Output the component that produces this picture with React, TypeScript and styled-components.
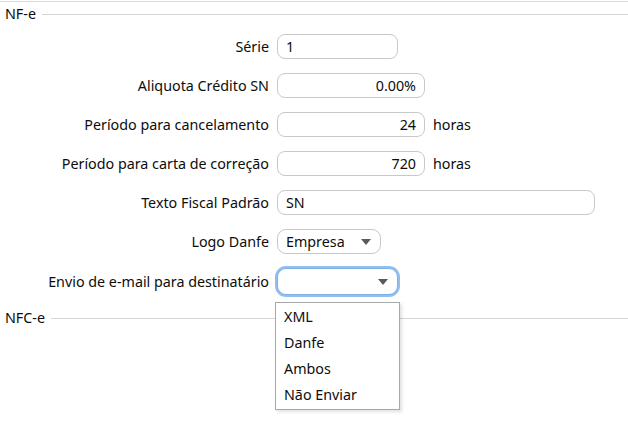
import React from "react";
import styled, { createGlobalStyle } from "styled-components";

const Global = createGlobalStyle`
  html, body { margin: 0; padding: 0; background: #fff; }
  body { font-family: "Noto Sans", "Open Sans", sans-serif; font-size: 14.3px; color: #0d0d0d; }
`;

const Page = styled.div`
  position: relative;
  width: 628px;
  height: 428px;
  overflow: hidden;
  border-top: 1px solid #dcdcdc;
  margin-top: 1px;
  box-sizing: border-box;
`;

const SectionHeader = styled.div<{ $top: number }>`
  display: flex;
  align-items: center;
  height: 20px;
  padding-left: 5px;
  margin-top: ${(p) => p.$top}px;
`;

const SectionTitle = styled.span`
  line-height: 20px;
`;

const SectionLine = styled.div`
  flex: 1;
  height: 1px;
  background: #d6d6d6;
  margin-left: 6px;
`;

const Form = styled.div`
  display: grid;
  grid-template-columns: 269px auto;
  column-gap: 8px;
  row-gap: 14px;
  margin-top: 10px;
  align-items: center;
`;

const Label = styled.div`
  text-align: right;
  line-height: 25px;
  white-space: nowrap;
`;

const Field = styled.div`
  display: flex;
  align-items: center;
  gap: 8px;
`;

const Input = styled.div<{ $w: number; $right?: boolean }>`
  box-sizing: border-box;
  width: ${(p) => p.$w}px;
  height: 25px;
  border: 1px solid #c8c8c8;
  border-radius: 8px;
  padding: 0 8px;
  line-height: 23px;
  text-align: ${(p) => (p.$right ? "right" : "left")};
  background: #fff;
`;

const Unit = styled.span`
  line-height: 25px;
`;

const Select = styled.div<{ $w: number; $focus?: boolean }>`
  box-sizing: border-box;
  width: ${(p) => p.$w}px;
  height: ${(p) => (p.$focus ? 27 : 25)}px;
  border: 1px solid ${(p) => (p.$focus ? "#7eb0e8" : "#c8c8c8")};
  box-shadow: ${(p) => (p.$focus ? "0 0 0 2px #93bfee" : "none")};
  border-radius: 9px;
  padding: 0 8px;
  display: flex;
  align-items: center;
  justify-content: space-between;
  background: #fff;
`;

const Arrow = styled.span`
  width: 0;
  height: 0;
  border-left: 5px solid transparent;
  border-right: 5px solid transparent;
  border-top: 6px solid #5a5a5a;
  margin-right: 1px;
  margin-left: 8px;
`;

const Popup = styled.div`
  position: absolute;
  left: 275px;
  top: 300px;
  width: 125px;
  box-sizing: border-box;
  border: 1px solid #a9a9a9;
  background: #fff;
  box-shadow: 2px 2px 3px rgba(0, 0, 0, 0.12);
  padding: 1px 0 1px;
`;

const Option = styled.div`
  height: 26px;
  line-height: 26px;
  padding-left: 8px;
`;

export default function App() {
  return (
    <>
      <Global />
      <Page>
        <SectionHeader $top={2}>
          <SectionTitle>NF-e</SectionTitle>
          <SectionLine />
        </SectionHeader>
        <Form>
          <Label>Série</Label>
          <Field>
            <Input $w={121}>1</Input>
          </Field>
          <Label>Aliquota Crédito SN</Label>
          <Field>
            <Input $w={148} $right>0.00%</Input>
          </Field>
          <Label>Período para cancelamento</Label>
          <Field>
            <Input $w={148} $right>24</Input>
            <Unit>horas</Unit>
          </Field>
          <Label>Período para carta de correção</Label>
          <Field>
            <Input $w={148} $right>720</Input>
            <Unit>horas</Unit>
          </Field>
          <Label>Texto Fiscal Padrão</Label>
          <Field>
            <Input $w={318}>SN</Input>
          </Field>
          <Label>Logo Danfe</Label>
          <Field>
            <Select $w={104}>
              <span>Empresa</span>
              <Arrow />
            </Select>
          </Field>
          <Label>Envio de e-mail para destinatário</Label>
          <Field>
            <Select $w={121} $focus>
              <span />
              <Arrow />
            </Select>
          </Field>
        </Form>
        <SectionHeader $top={13}>
          <SectionTitle>NFC-e</SectionTitle>
          <SectionLine />
        </SectionHeader>
        <Popup>
          <Option>XML</Option>
          <Option>Danfe</Option>
          <Option>Ambos</Option>
          <Option>Não Enviar</Option>
        </Popup>
      </Page>
    </>
  );
}
